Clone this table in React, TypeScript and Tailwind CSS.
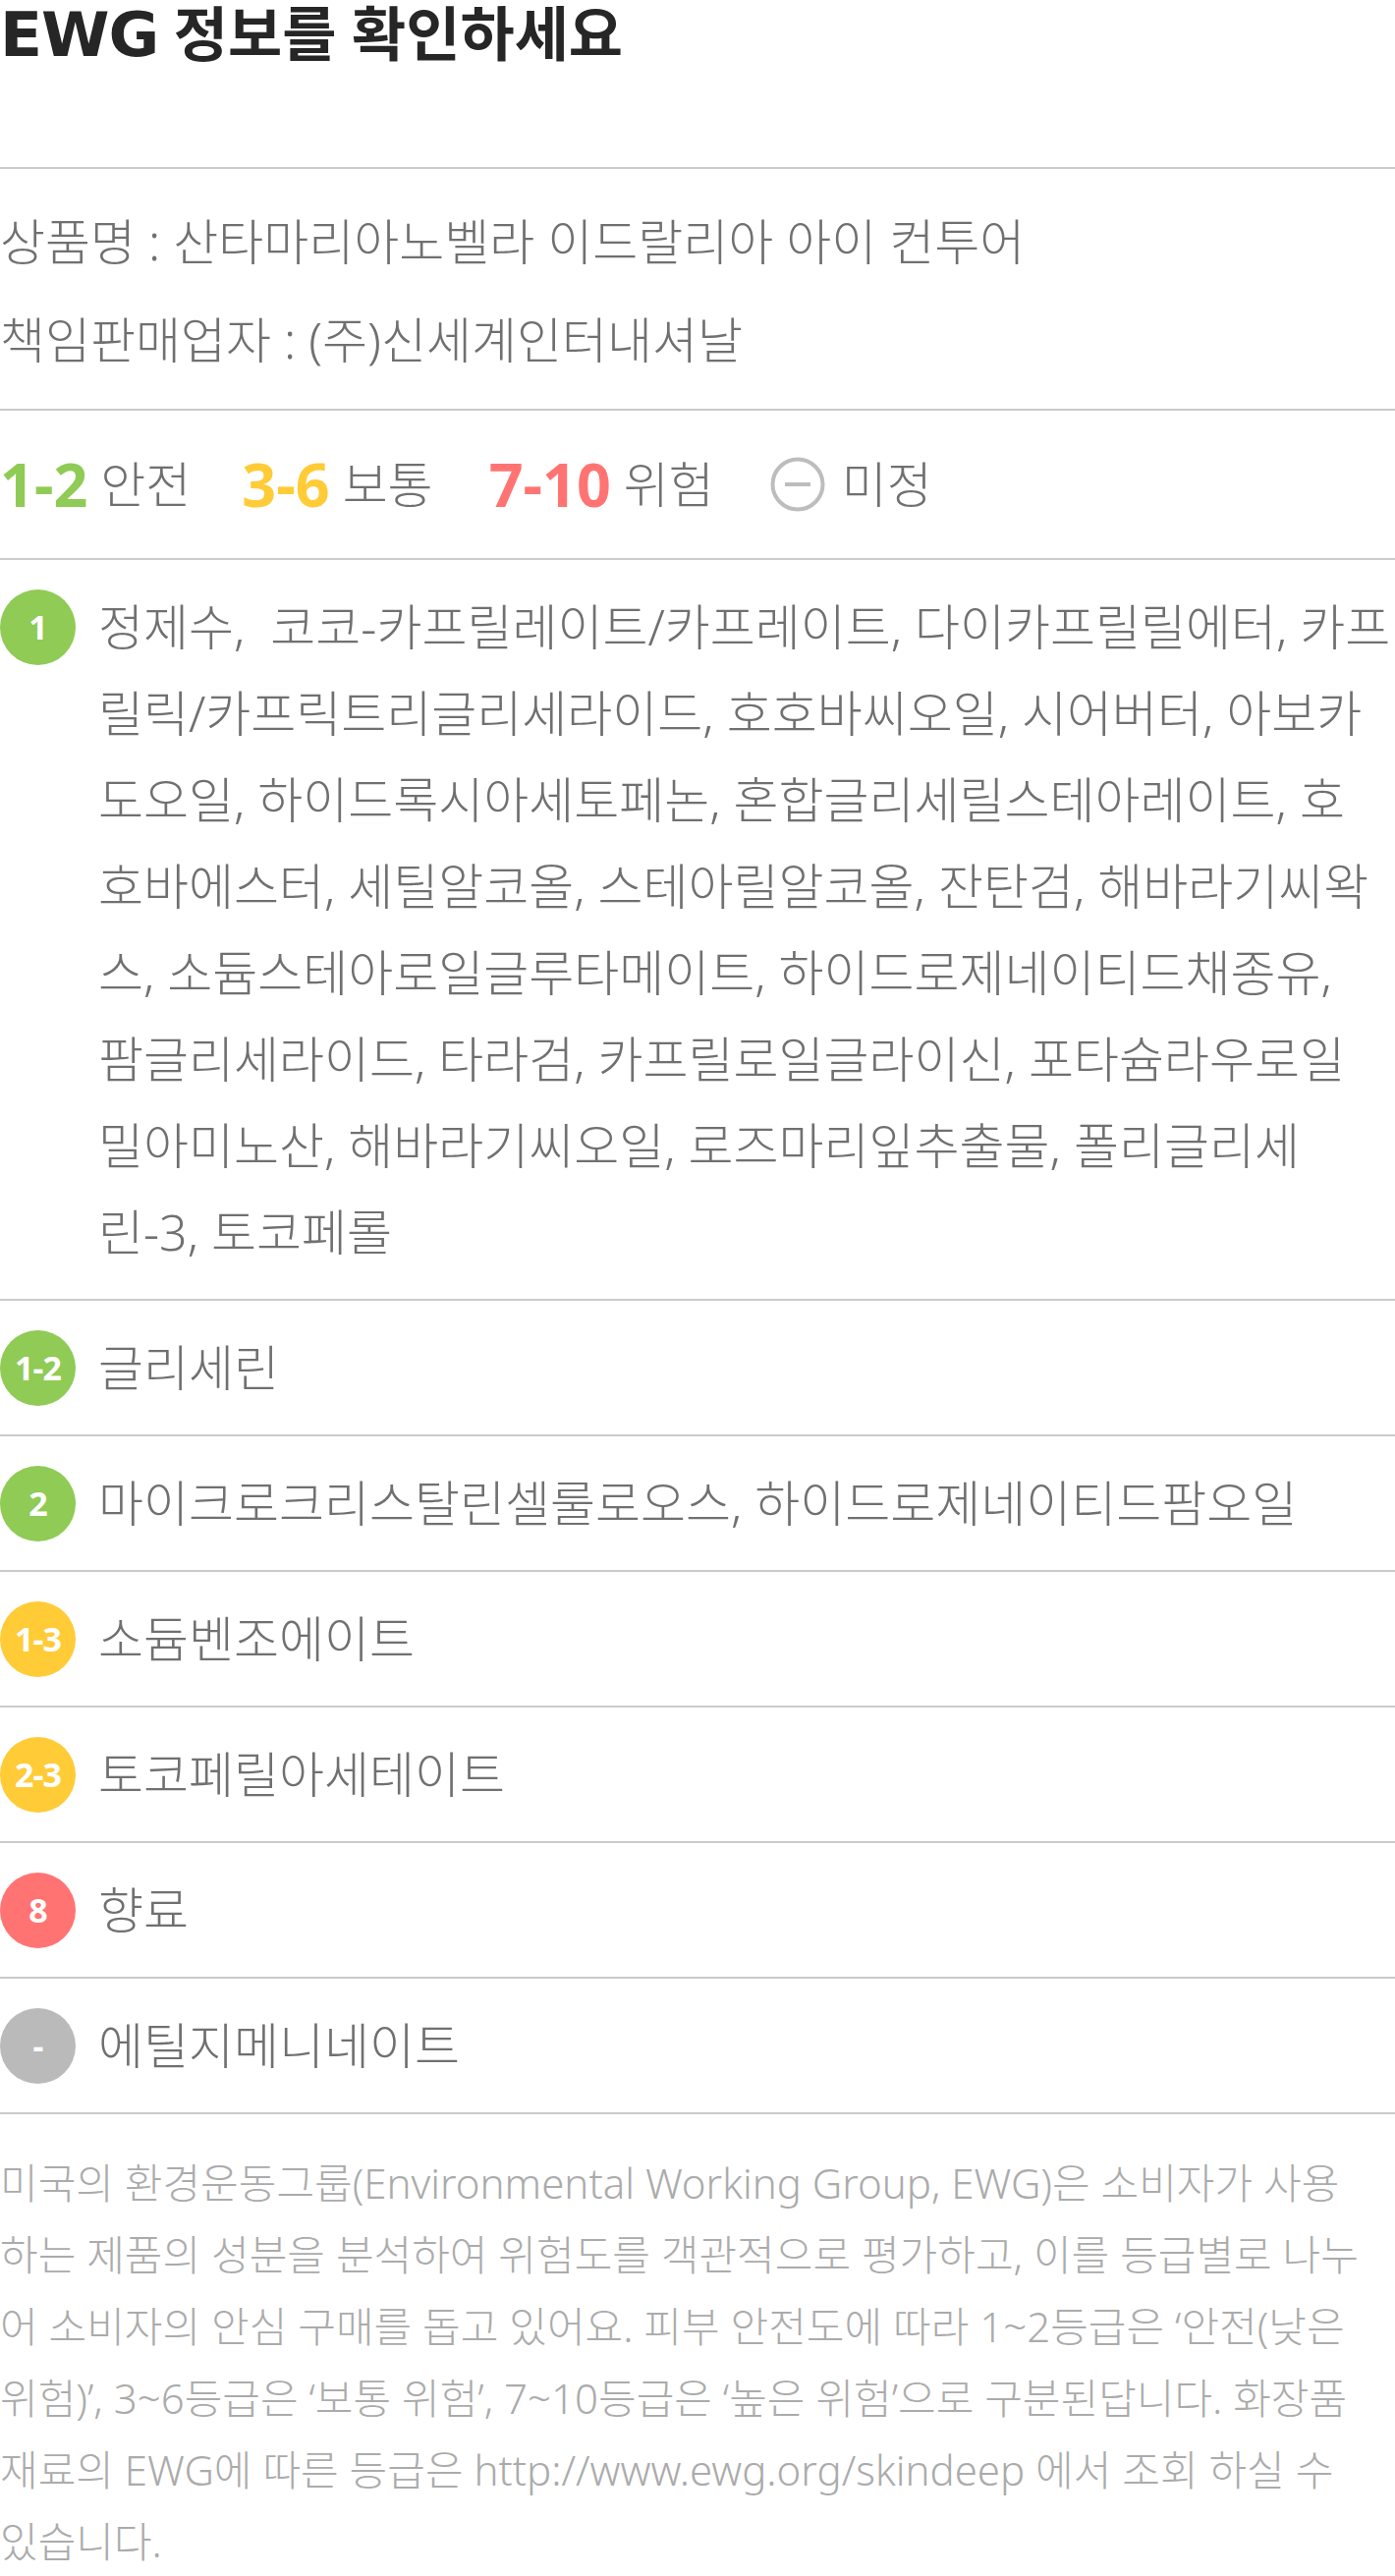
const ingredients = [
  {
    grade: '1',
    color: 'bg-[#8fcb55]',
    lines: [
      '정제수,  코코-카프릴레이트/카프레이트, 다이카프릴릴에터, 카프',
      '릴릭/카프릭트리글리세라이드, 호호바씨오일, 시어버터, 아보카',
      '도오일, 하이드록시아세토페논, 혼합글리세릴스테아레이트, 호',
      '호바에스터, 세틸알코올, 스테아릴알코올, 잔탄검, 해바라기씨왁',
      '스, 소듐스테아로일글루타메이트, 하이드로제네이티드채종유,',
      '팜글리세라이드, 타라검, 카프릴로일글라이신, 포타슘라우로일',
      '밀아미노산, 해바라기씨오일, 로즈마리잎추출물, 폴리글리세',
      '린-3, 토코페롤',
    ],
  },
  { grade: '1-2', color: 'bg-[#8fcb55]', lines: ['글리세린'] },
  { grade: '2', color: 'bg-[#8fcb55]', lines: ['마이크로크리스탈린셀룰로오스, 하이드로제네이티드팜오일'] },
  { grade: '1-3', color: 'bg-[#ffcb37]', lines: ['소듐벤조에이트'] },
  { grade: '2-3', color: 'bg-[#ffcb37]', lines: ['토코페릴아세테이트'] },
  { grade: '8', color: 'bg-[#ff7473]', lines: ['향료'] },
  { grade: '-', color: 'bg-[#bababa]', lines: ['에틸지메니네이트'] },
];

const notice = [
  '미국의 환경운동그룹(Environmental Working Group, EWG)은 소비자가 사용',
  '하는 제품의 성분을 분석하여 위험도를 객관적으로 평가하고, 이를 등급별로 나누',
  '어 소비자의 안심 구매를 돕고 있어요. 피부 안전도에 따라 1~2등급은 ‘안전(낮은',
  '위험)’, 3~6등급은 ‘보통 위험’, 7~10등급은 ‘높은 위험’으로 구분된답니다. 화장품',
  '재료의 EWG에 따른 등급은 http://www.ewg.org/skindeep 에서 조회 하실 수',
  '있습니다.',
];

function GradeBadge({ grade, color }: { grade: string; color: string }) {
  return (
    <div
      className={`${color} mt-[6px] flex h-[77px] w-[77px] shrink-0 items-center justify-center rounded-full text-[34px] font-bold tracking-[-1px] text-white`}
    >
      {grade}
    </div>
  );
}

function LegendItem({ range, label, color, className }: { range: string; label: string; color: string; className?: string }) {
  return (
    <div className={`flex items-center gap-[13px] ${className ?? ''}`}>
      <span className={`text-[61px] font-bold ${color}`}>{range}</span>
      <span className="text-[50px] font-light text-[#707070]">{label}</span>
    </div>
  );
}

function Legend() {
  return (
    <div className="flex items-center border-b-2 border-[#cbcbcb] py-[31px] leading-[88px]">
      <LegendItem range="1-2" label="안전" color="text-[#8fcb55]" />
      <LegendItem range="3-6" label="보통" color="text-[#ffcb37]" className="ml-[52px]" />
      <LegendItem range="7-10" label="위험" color="text-[#ff7473]" className="ml-[57px]" />
      <div className="ml-[57px] flex items-center gap-[17px]">
        {/* 미정 icon */}
        <svg width="56" height="56" viewBox="0 0 56 56">
          <circle cx="28" cy="28" r="25.5" fill="none" stroke="#bdbdbd" strokeWidth="4" />
          <rect x="15" y="26" width="26" height="4" fill="#bdbdbd" />
        </svg>
        <span className="text-[50px] font-light text-[#707070]">미정</span>
      </div>
    </div>
  );
}

export default function App() {
  return (
    <div className="w-[1420px] bg-white font-['Noto_Sans','Noto_Sans_CJK_KR',sans-serif]">
      <h1 className="h-[172px] border-b-2 border-[#cbcbcb] pt-[2px] text-[60px] font-bold leading-[64px] text-[#262626]">
        <span className="font-['DejaVu_Sans','Noto_Sans',sans-serif] text-[63px] leading-[50px] tracking-[-1px]">EWG</span> 정보를 확인하세요
      </h1>

      <div className="border-b-2 border-[#cbcbcb] pt-[30px] pb-[26px] text-[50px] font-light leading-[88px] text-[#707070]">
        <p>상품명 : 산타마리아노벨라 이드랄리아 아이 컨투어</p>
        <p className="mt-[12px]">책임판매업자 : (주)신세계인터내셔날</p>
      </div>

      <Legend />

      {ingredients.map((item) => (
        <div key={item.grade + item.lines[0]} className="flex items-start border-b-2 border-[#cbcbcb] py-[24px]">
          <GradeBadge grade={item.grade} color={item.color} />
          <p className="ml-[23px] flex-1 text-[50px] font-light leading-[88px] text-[#707070]">
            {item.lines.map((line, i) => (
              <span key={i} className="block whitespace-pre">
                {line}
              </span>
            ))}
          </p>
        </div>
      ))}

      <p className="pt-[33px] text-[42px] font-light leading-[73px] text-[#ababab]">
        {notice.map((line, i) => (
          <span key={i} className="block whitespace-pre">
            {line}
          </span>
        ))}
      </p>
    </div>
  );
}
